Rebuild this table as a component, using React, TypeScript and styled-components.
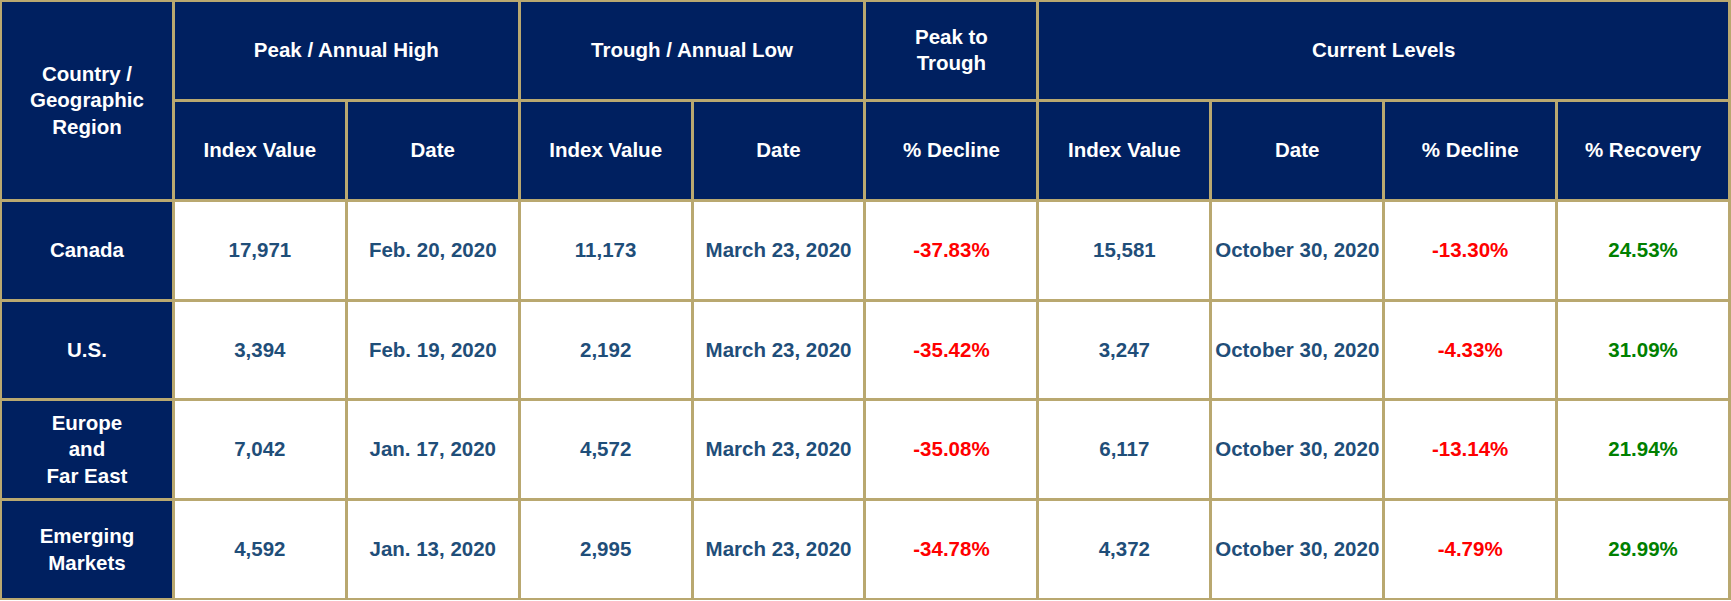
import React from "react";
import styled, { createGlobalStyle } from "styled-components";

/* ─── Styles ─── */

const GlobalStyle = createGlobalStyle`
  html, body {
    margin: 0;
    padding: 0;
    background: #ffffff;
  }
`;

const Table = styled.div`
  width: 1731px;
  height: 600px;
  box-sizing: border-box;
  display: grid;
  grid-template-columns: repeat(10, 1fr);
  grid-template-rows: repeat(6, 1fr);
  gap: 3px;
  padding: 2px 3px 2px 2px;
  background: #b9a870;
  font-family: "Liberation Sans", Arial, sans-serif;
  font-weight: 700;
  font-size: 20.5px;
  line-height: 26.5px;
`;

const HeadCell = styled.div<{ $col?: string; $row?: string }>`
  grid-column: ${({ $col }) => $col ?? "auto"};
  grid-row: ${({ $row }) => $row ?? "auto"};
  background: #002060;
  color: #ffffff;
  display: flex;
  align-items: center;
  justify-content: center;
  text-align: center;
  padding: 0 6px;
`;

type Tone = "index" | "decline" | "recovery";

const toneColor: Record<Tone, string> = {
  index: "#1f4e79",
  decline: "#ff0000",
  recovery: "#008000",
};

const DataCell = styled.div<{ $tone: Tone }>`
  background: #ffffff;
  color: ${({ $tone }) => toneColor[$tone]};
  display: flex;
  align-items: center;
  justify-content: center;
  text-align: center;
  white-space: nowrap;
`;

/* ─── Data ─── */

interface Row {
  region: React.ReactNode;
  peak: string;
  peakDate: string;
  trough: string;
  troughDate: string;
  drop: string;
  current: string;
  currentDate: string;
  currentDrop: string;
  recovery: string;
}

const rows: Row[] = [
  {
    region: "Canada",
    peak: "17,971",
    peakDate: "Feb. 20, 2020",
    trough: "11,173",
    troughDate: "March 23, 2020",
    drop: "-37.83%",
    current: "15,581",
    currentDate: "October 30, 2020",
    currentDrop: "-13.30%",
    recovery: "24.53%",
  },
  {
    region: "U.S.",
    peak: "3,394",
    peakDate: "Feb. 19, 2020",
    trough: "2,192",
    troughDate: "March 23, 2020",
    drop: "-35.42%",
    current: "3,247",
    currentDate: "October 30, 2020",
    currentDrop: "-4.33%",
    recovery: "31.09%",
  },
  {
    region: (
      <>
        Europe
        <br />
        and
        <br />
        Far East
      </>
    ),
    peak: "7,042",
    peakDate: "Jan. 17, 2020",
    trough: "4,572",
    troughDate: "March 23, 2020",
    drop: "-35.08%",
    current: "6,117",
    currentDate: "October 30, 2020",
    currentDrop: "-13.14%",
    recovery: "21.94%",
  },
  {
    region: (
      <>
        Emerging
        <br />
        Markets
      </>
    ),
    peak: "4,592",
    peakDate: "Jan. 13, 2020",
    trough: "2,995",
    troughDate: "March 23, 2020",
    drop: "-34.78%",
    current: "4,372",
    currentDate: "October 30, 2020",
    currentDrop: "-4.79%",
    recovery: "29.99%",
  },
];

const subHeads = [
  "Index Value",
  "Date",
  "Index Value",
  "Date",
  "% Decline",
  "Index Value",
  "Date",
  "% Decline",
  "% Recovery",
];

/* ─── Component ─── */

export default function App() {
  return (
    <>
      <GlobalStyle />
      <Table>
        <HeadCell $col="1" $row="1 / span 2">
          Country /<br />
          Geographic
          <br />
          Region
        </HeadCell>
        <HeadCell $col="2 / span 2" $row="1">
          Peak / Annual High
        </HeadCell>
        <HeadCell $col="4 / span 2" $row="1">
          Trough / Annual Low
        </HeadCell>
        <HeadCell $col="6" $row="1">
          Peak to
          <br />
          Trough
        </HeadCell>
        <HeadCell $col="7 / span 4" $row="1">
          Current Levels
        </HeadCell>
        {subHeads.map((h, i) => (
          <HeadCell key={i} $row="2">
            {h}
          </HeadCell>
        ))}

        {rows.map((r, i) => (
          <React.Fragment key={i}>
            <HeadCell>{r.region}</HeadCell>
            <DataCell $tone="index">{r.peak}</DataCell>
            <DataCell $tone="index">{r.peakDate}</DataCell>
            <DataCell $tone="index">{r.trough}</DataCell>
            <DataCell $tone="index">{r.troughDate}</DataCell>
            <DataCell $tone="decline">{r.drop}</DataCell>
            <DataCell $tone="index">{r.current}</DataCell>
            <DataCell $tone="index">{r.currentDate}</DataCell>
            <DataCell $tone="decline">{r.currentDrop}</DataCell>
            <DataCell $tone="recovery">{r.recovery}</DataCell>
          </React.Fragment>
        ))}
      </Table>
    </>
  );
}
